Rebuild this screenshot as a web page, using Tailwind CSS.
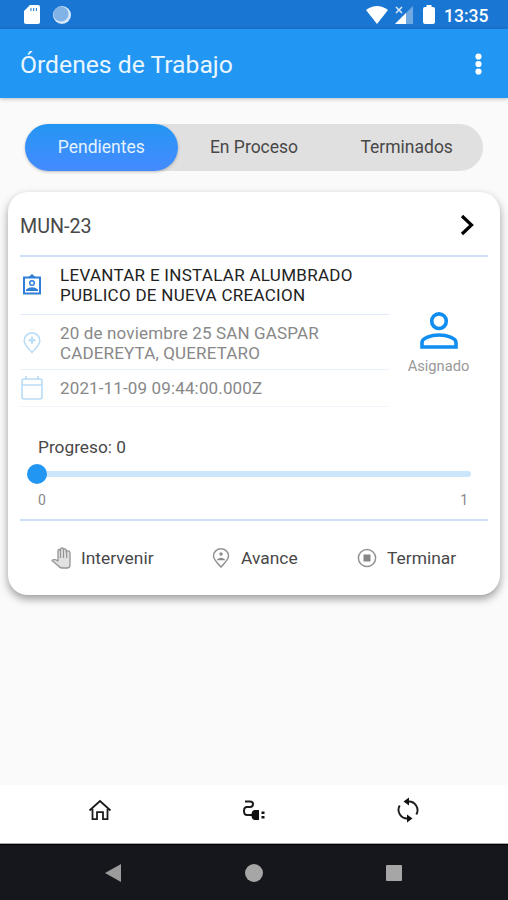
<!DOCTYPE html>
<html lang="es">
<head>
  <meta charset="UTF-8" />
  <meta name="viewport" content="width=device-width, initial-scale=1.0" />
  <title>Órdenes de Trabajo</title>
  <script src="https://cdn.jsdelivr.net/npm/@tailwindcss/browser@4"></script>
</head>
<body class="font-[Roboto,sans-serif] bg-[#fafafa] w-[508px] h-[900px] flex flex-col overflow-hidden text-[#484848]">

  <!-- Status bar -->
  <div class="h-[29px] shrink-0 bg-[#1976d2] flex items-center pl-6 pr-5 text-white">
    <svg class="w-4 h-[19px]" viewBox="0 0 16 19"><path fill="#fff" d="M6 0h8q2 0 2 2v15q0 2-2 2H2q-2 0-2-2V6z"/><path stroke="#1976d2" stroke-width="1" d="M7 3v3M9.700 3v3M12.400 3v3"/></svg>
    <svg class="w-[18px] h-[18px] ml-[13px]" viewBox="0 0 18 18"><circle cx="9" cy="9" r="9" fill="#d6e8fa"/><circle cx="8" cy="8" r="7.600" fill="#82b3e6"/></svg>
    <svg class="w-[22px] h-[18px] ml-auto" viewBox="0 0 22 18"><path fill="#fff" d="M0 4Q11-4 22 4L11 18z"/></svg>
    <svg class="w-[18px] h-[18px] ml-[7px]" viewBox="0 0 18 18"><path fill="#6fa9e4" d="M18 0v18H0z"/><path fill="#fff" d="M11 7v11H0z"/><path stroke="#dcebfa" stroke-width="1.500" d="M1 1l6 6M7 1L1 7"/></svg>
    <svg class="w-3 h-[19px] ml-[10px]" viewBox="0 0 12 19"><path fill="#fff" d="M3.500 0h5v2H10q2 0 2 2v13q0 2-2 2H2q-2 0-2-2V4q0-2 2-2h1.500z"/></svg>
    <span class="ml-[9px] mt-0.5 w-[44px] text-[17.500px] leading-5 font-medium whitespace-nowrap">13:35</span>
  </div>

  <!-- App bar -->
  <header class="h-[69px] shrink-0 bg-[#2196f3] flex items-center justify-between pl-5 pr-[26px] shadow-[0_1px_4px_rgba(0,0,0,0.25)]">
    <h1 class="text-[24.700px] text-[#eaf6ff] mt-0.5">Órdenes de Trabajo</h1>
    <svg class="w-[7px] h-[22px]" viewBox="0 0 7 22" fill="#fff"><circle cx="3.500" cy="3.500" r="3.100"/><circle cx="3.500" cy="11" r="3.100"/><circle cx="3.500" cy="18.500" r="3.100"/></svg>
  </header>

  <!-- Tabs -->
  <div class="mt-[26px] mx-[25px] w-[458px] h-[47px] shrink-0 rounded-full bg-[#e0e0e0] grid grid-cols-3 items-center text-center text-[17.500px]">
    <div class="h-full flex items-center justify-center rounded-full bg-linear-to-b from-[#2196f3] to-[#448aff] text-[#e3f1ff] shadow-[0_1px_3px_rgba(0,0,0,0.25)]">Pendientes</div>
    <div>En Proceso</div>
    <div>Terminados</div>
  </div>

  <!-- Order card -->
  <main class="mt-[21px] ml-2 w-[492px] h-[403px] shrink-0 bg-white rounded-[20px] px-3 flex flex-col shadow-[0_4px_8px_rgba(0,0,0,0.38)]">
    <div class="h-[63px] flex items-center justify-between pr-[13px] pt-[3px]">
      <span class="text-[19.700px] mt-[3px]">MUN-23</span>
      <svg class="w-[15px] h-[22px]" viewBox="0 0 15 22" fill="none" stroke="#000" stroke-width="3.200"><path d="M2 2l9.500 9L2 20"/></svg>
    </div>

    <div class="h-[164px] border-t-2 border-[#cfdffa] flex">
      <div class="w-[369px] leading-[19.500px] text-[17px] text-[#888]">
        <div class="h-[58px] border-b border-[#e1eafa] flex items-center text-[#222]">
          <svg class="w-6 h-6 mr-[17px] -mt-0.5 shrink-0" viewBox="0 0 24 24" fill="none" stroke="#2f7fd8" stroke-width="2"><path d="M4 4.500h16v16H4z"/><path fill="#2f7fd8" stroke="none" d="M8.500 4L12 1 15.500 4zM6 18v-1.500q6-4.500 12 0V18z"/><circle cx="12" cy="10" r="2.300" stroke-width="1.500"/></svg>
          <p class="whitespace-nowrap -ml-px tracking-[0.290px]">LEVANTAR E INSTALAR ALUMBRADO<br>PUBLICO DE NUEVA CREACION</p>
        </div>
        <div class="h-[55px] border-b border-[#e8f2fc] flex items-center pt-1">
          <svg class="w-6 h-6 mr-[17px] -mt-0.5 shrink-0" viewBox="0 0 24 24" fill="none" stroke="#b9dcf7" stroke-width="1.600"><path d="M12 21.500C8 17 4.200 13.500 4.200 9.700a7.800 7.800 0 0 1 15.600 0c0 3.800-3.800 7.300-7.800 11.800z"/><path stroke-width="2" d="M12 5.800v7M8.500 9.300h7"/></svg>
          <p class="whitespace-nowrap -ml-px -mt-px tracking-[0.150px]">20 de noviembre 25 SAN GASPAR<br>CADEREYTA, QUERETARO</p>
        </div>
        <div class="h-[37px] border-b border-[#f0f6fc] flex items-center">
          <svg class="w-6 h-6 mr-[17px] shrink-0" viewBox="0 0 24 24" fill="none" stroke="#b9dcf7" stroke-width="1.600"><rect x="2" y="3" width="20" height="20" rx="2"/><path d="M2 9h20M6 0v4M18 0v4"/></svg>
          <p class="whitespace-nowrap -ml-px mt-0.5 tracking-[0.140px]">2021-11-09 09:44:00.000Z</p>
        </div>
      </div>
      <div class="w-[99px] pt-[55px] flex flex-col items-center">
        <svg class="w-[38px] h-[37px]" viewBox="0 0 38 37" fill="none" stroke="#0f8df0" stroke-width="3.600"><circle cx="19" cy="9.200" r="7.300"/><path d="M2 35v-4.500C2 26 11 23 19 23s17 3 17 7.500V35z"/></svg>
        <span class="mt-[7px] text-[14.700px] leading-5 text-[#999]">Asignado</span>
      </div>
    </div>

    <!-- Progress slider -->
    <div class="h-[102px] border-b-2 border-[#cfdffa] pl-[18px] pt-[16px]">
      <p class="text-[17.300px] leading-6">Progreso: <span id="progressValue">0</span></p>
      <div class="relative mt-3 -ml-px mr-[17px] h-[6px] rounded-full bg-[#cbe6fb]">
        <div class="absolute -left-[10px] -top-[7px] size-5 rounded-full bg-[#2196f3]"></div>
      </div>
      <div class="mt-[13px] flex justify-between pr-5 text-[14px] leading-5 text-[#888]"><span>0</span><span>1</span></div>
    </div>

    <!-- Actions -->
    <div class="h-[74px] flex items-center text-[17.400px] pl-[31px]">
      <div class="w-[161px] flex items-center">
        <svg class="w-[21px] h-[22px] mr-[9px]" viewBox="0 0 21 22" fill="none" stroke="#949494" stroke-width="1.300" stroke-linejoin="round"><path fill="#e2e2e2" d="M7 14V4q0-1.500 1.200-1.500T9.500 4V2.500Q9.500 1 11 1t1.500 1.500V3q0-1.200 1.300-1.200T15.200 3v2q0-1.200 1.800-1.200T19 5.500V18q0 3-3 3h-5q-2 0-3.500-2L1 13.500q2-2 6 .5z"/><path stroke-width="1.200" d="M9.500 4v7M12.500 3v8M15.700 5v6"/></svg>
        <span>Intervenir</span>
      </div>
      <div class="w-[145px] flex items-center">
        <svg class="w-[18px] h-5 mr-[11px]" viewBox="0 0 18 20" fill="none" stroke="#949494" stroke-width="1.500"><path d="M9 19C5 14.800 1.500 11.500 1.500 8a7.500 7.200 0 0 1 15 0c0 3.500-3.500 6.800-7.500 11z"/><path fill="#8c8c8c" stroke="none" d="M5 11.500q4-3.500 8 0v.8H5z"/><circle cx="9" cy="6" r="1.700" fill="#8c8c8c" stroke="none"/></svg>
        <span>Avance</span>
      </div>
      <div class="flex items-center">
        <svg class="w-5 h-5 mr-[10px]" viewBox="0 0 20 20" fill="none" stroke="#949494" stroke-width="1.500"><circle cx="10" cy="10" r="8.600"/><rect x="6.500" y="6.500" width="7" height="7" fill="#868686" stroke="none"/></svg>
        <span>Terminar</span>
      </div>
    </div>
  </main>

  <!-- Bottom navigation -->
  <nav class="mt-auto h-[59px] shrink-0 bg-white border-b border-[#aaa] flex items-center justify-between pl-[88px] pr-[88px] pb-[9px]">
    <svg class="w-6 h-6" viewBox="0 0 24 24" fill="none" stroke="#1c1c1c" stroke-width="1.800"><path d="M1.500 12.500L12 3l10.500 9.500M4.500 11v10.200H9v-7h6v7h4.500V11"/></svg>
    <svg class="w-6 h-6" viewBox="0 0 24 24" fill="none" stroke="#1c1c1c" stroke-width="2"><path d="M3 3.500h5q3 0 3 2.700T8 9H5Q2 9 2 13t3 4h3"/><path fill="#111" stroke="none" d="M13 12h4v10h-4q-3 0-3.500-4H8v-2h1.500q.5-4 3.500-4zM19.500 13.500h3v2.500h-3zM19.500 18h3v2.500h-3z"/></svg>
    <svg class="w-6 h-[26px]" viewBox="0 0 24 26" fill="none" stroke="#1c1c1c" stroke-width="1.900"><path d="M12 4.500a8.700 8.700 0 0 1 8.300 13M12 21.500a8.700 8.700 0 0 1-8.300-13"/><path fill="#111" stroke="none" d="M13 .5v8L7.500 4.500zM11 17.500v8l5.500-4z"/></svg>
  </nav>

  <!-- System buttons -->
  <footer class="h-[56px] shrink-0 bg-[#15171c] border-t border-black flex items-center justify-between pl-[105px] pr-[106px]">
    <svg class="w-4 h-[18px]" viewBox="0 0 16 18"><path fill="#9b9b9b" d="M16 0v18L0 9z"/></svg>
    <div class="size-[18px] rounded-full bg-[#a6a6a6] ml-[1px]"></div>
    <div class="size-4 rounded-[1px] bg-[#a6a6a6]"></div>
  </footer>
</body>
</html>
